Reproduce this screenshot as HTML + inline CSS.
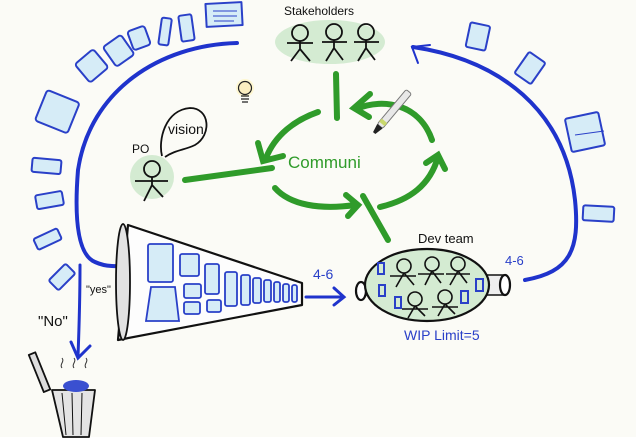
<!DOCTYPE html>
<html><head><meta charset="utf-8"><style>
html,body{margin:0;padding:0;background:#fbfbf7;}
svg{display:block}
text{font-family:"Liberation Sans",sans-serif}
</style></head><body>
<svg width="636" height="444" viewBox="0 0 636 444" xmlns="http://www.w3.org/2000/svg">
<rect width="636" height="444" fill="#fbfbf6"/>
<rect y="437" width="636" height="7" fill="#ffffff"/>
<g fill="#d6ecf7" stroke="#2a40c8" stroke-width="2" stroke-linejoin="round">
<rect x="206" y="3" width="36" height="23" transform="rotate(-3 224 14)"/>
<rect x="180" y="15" width="13" height="26" rx="2" transform="rotate(-8 186 28)"/>
<rect x="160" y="18" width="10" height="27" rx="2" transform="rotate(8 165 32)"/>
<rect x="130" y="28" width="18" height="20" rx="3" transform="rotate(-20 139 38)"/>
<rect x="108" y="38" width="22" height="24" rx="3" transform="rotate(-35 120 51)"/>
<rect x="80" y="53" width="24" height="24" rx="3" transform="rotate(-40 93 66)"/>
<rect x="40" y="95" width="35" height="33" rx="3" transform="rotate(22 57 111)"/>
<rect x="32" y="159" width="29" height="14" rx="2" transform="rotate(5 47 166)"/>
<rect x="36" y="193" width="27" height="14" rx="2" transform="rotate(-10 50 200)"/>
<rect x="35" y="233" width="26" height="12" rx="2" transform="rotate(-25 48 240)"/>
<rect x="50" y="270" width="24" height="14" rx="2" transform="rotate(-45 62 277)"/>
<rect x="468" y="24" width="20" height="25" rx="2" transform="rotate(12 478 36)"/>
<rect x="520" y="55" width="20" height="26" rx="2" transform="rotate(35 530 68)"/>
<rect x="568" y="115" width="34" height="34" rx="2" transform="rotate(-12 585 132)"/>
<rect x="583" y="206" width="31" height="15" rx="2" transform="rotate(3 598 213)"/>
</g>
<g stroke="#2a40c8" stroke-width="1" fill="none"><path d="M213 11h24M213 16h24M214 21h20M575 135l29-4"/></g>
<g stroke="#1f33cc" stroke-width="4" fill="none" stroke-linecap="round">
<path d="M237 43C160 45 90 90 78 170 74 220 78 255 95 262 108 268 120 266 132 265"/>
<path d="M120 255l14 10-14 9" stroke-width="3"/>
<path d="M80 265C80 300 79 330 78 356" stroke-width="3"/>
<path d="M71 342l7 16 12-12" stroke-width="3"/>
<path d="M413 47C500 60 565 110 575 200 580 250 570 272 525 280"/>
<path d="M430 45l-18 2 6 16" stroke-width="2"/>
<path d="M306 297h37M334 288l10 9-10 8" stroke-width="3"/>
</g>
<ellipse cx="330" cy="42" rx="55" ry="22" fill="#d4ebd2"/>
<text x="284" y="15" font-size="12" fill="#111">Stakeholders</text>
<g stroke="#111" stroke-width="1.8" fill="none">
<circle cx="300" cy="33" r="8"/><path d="M287 43h26M300 41v8l-9 12M300 49l10 12"/>
<circle cx="334" cy="32" r="8"/><path d="M322 42h25M334 40v8l-8 13M334 48l9 12"/>
<circle cx="366" cy="32" r="8"/><path d="M354 42h25M366 40v8l-8 13M366 48l9 12"/>
</g>
<circle cx="245" cy="88" r="9" fill="#fff6c8" opacity=".8"/>
<circle cx="245" cy="88" r="6.5" fill="#fbeec0" stroke="#222" stroke-width="1.2"/>
<path d="M241 96h8M241 99h8M242 102h6" stroke="#222" stroke-width="1.3"/>
<circle cx="152" cy="177" r="22" fill="#d4ebd2"/>
<text x="132" y="153" font-size="12" fill="#111">PO</text>
<g stroke="#111" stroke-width="1.8" fill="none">
<circle cx="152" cy="169" r="8"/><path d="M135 181h33M152 177v8l-8 16M152 185l11 12"/>
<path d="M162 156C158 140 165 110 190 108 210 108 212 135 195 145 185 150 175 150 165 157"/>
</g>
<text x="168" y="134" font-size="14" fill="#111">vision</text>
<g stroke="#2f9b2a" stroke-width="6" fill="none" stroke-linecap="round">
<path d="M336 74l1 44"/>
<path d="M318 112C295 120 275 135 266 158"/>
<path d="M258 143l5 18 20-5"/>
<path d="M185 180L272 168"/>
<path d="M356 109C385 97 420 105 432 140"/>
<path d="M370 94l-16 14 15 9"/>
<path d="M380 207C410 200 430 185 438 157"/>
<path d="M426 163l12-8 7 14"/>
<path d="M275 188C290 205 320 210 355 205"/>
<path d="M346 195l12 10-10 11"/>
<path d="M363 196l25 44"/>
</g>
<text x="288" y="168" font-size="17" fill="#2f9b2a">Communi</text>
<g transform="rotate(40 390 115)">
<rect x="386" y="85" width="7" height="45" rx="2" fill="#e8e8e8" stroke="#777" stroke-width="1"/>
<rect x="386" y="123" width="7" height="4" fill="#c9d86b"/>
<path d="M386 130h7l-2 9h-3z" fill="#222"/>
</g>
<path d="M128 225L302 283 302 305 118 340Z" fill="#fdfdfd" stroke="#111" stroke-width="2.2" stroke-linejoin="round"/>
<ellipse cx="123" cy="282" rx="7" ry="58" fill="#e2e2e2" stroke="#111" stroke-width="1.8"/>
<g fill="#d6ecf7" stroke="#2a40c8" stroke-width="1.8">
<rect x="148" y="244" width="25" height="38" rx="2"/><path d="M151 287h24l4 34h-33z"/>
<rect x="180" y="254" width="19" height="22" rx="2"/><rect x="184" y="284" width="17" height="14" rx="2"/><rect x="184" y="302" width="16" height="12" rx="2"/>
<rect x="205" y="264" width="14" height="30" rx="2"/><rect x="207" y="300" width="14" height="12" rx="2"/>
<rect x="225" y="272" width="12" height="34" rx="2"/><rect x="241" y="275" width="9" height="30" rx="2"/>
<rect x="253" y="278" width="8" height="25" rx="2"/><rect x="264" y="280" width="7" height="22" rx="2"/>
<rect x="274" y="282" width="6" height="20" rx="2"/><rect x="283" y="284" width="6" height="18" rx="2"/><rect x="292" y="285" width="5" height="17" rx="2"/>
</g>
<text x="86" y="293" font-size="11" fill="#111">"yes"</text>
<text x="38" y="326" font-size="15" fill="#111">"No"</text>
<text x="313" y="279" font-size="14" fill="#2a40c8">4-6</text>
<g stroke="#111" stroke-width="1.8" stroke-linejoin="round">
<rect x="36" y="352" width="7" height="40" fill="#ddd" transform="rotate(-22 40 372)"/>
<path d="M52 390h43l-6 47H63Z" fill="#e4e4e4"/>
<path d="M62 393l4 42M72 393l1 42M82 393l-1 42" fill="none" stroke-width="1"/>
</g>
<ellipse cx="76" cy="386" rx="13" ry="6" fill="#3a50d0"/>
<path d="M62 368c-3-4 3-6 0-10M74 368c-3-4 3-6 0-10M86 368c-3-4 3-6 0-10" stroke="#333" fill="none" stroke-width="1"/>
<text x="418" y="243" font-size="13" fill="#111">Dev team</text>
<g stroke="#111" stroke-width="2.2">
<path d="M360 285l30-10 0 20z" fill="#eee"/>
<ellipse cx="361" cy="291" rx="5" ry="9" fill="#fff"/>
<path d="M485 275h20v20h-20z" fill="#eee" stroke-width="1.5"/>
<ellipse cx="505" cy="285" rx="5" ry="10" fill="#fff"/>
<ellipse cx="427" cy="285" rx="62" ry="36" fill="#d4ebd2"/>
</g>
<g stroke="#111" stroke-width="1.6" fill="none">
<circle cx="404" cy="266" r="7"/><path d="M390 276h26M404 273l-8 14M404 273l10 12"/>
<circle cx="432" cy="264" r="7"/><path d="M418 274h26M432 271l-7 14M432 271l9 12"/>
<circle cx="458" cy="264" r="7"/><path d="M446 274h24M458 271l-8 14M458 271l9 12"/>
<circle cx="415" cy="299" r="7"/><path d="M402 309h26M415 306l-7 12M415 306l10 10"/>
<circle cx="445" cy="297" r="7"/><path d="M432 307h26M445 304l-7 12M445 304l10 10"/>
</g>
<g fill="none" stroke="#2a40c8" stroke-width="2">
<rect x="378" y="263" width="6" height="11"/><rect x="379" y="285" width="6" height="11"/><rect x="395" y="297" width="6" height="11"/>
<rect x="461" y="291" width="7" height="12"/><rect x="476" y="279" width="7" height="12"/>
</g>
<text x="404" y="340" font-size="14" fill="#2a40c8">WIP Limit=5</text>
<text x="505" y="265" font-size="13" fill="#2a40c8">4-6</text>
</svg>
</body></html>
